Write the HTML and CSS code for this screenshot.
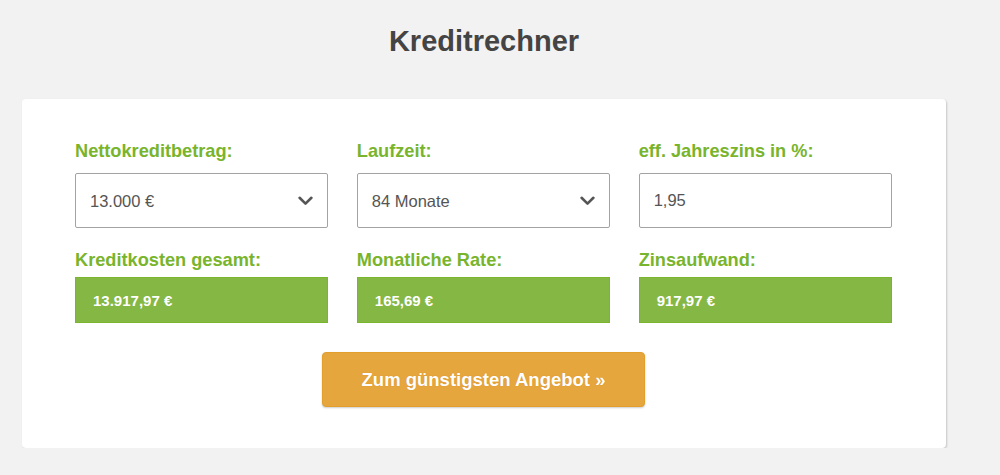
FILE: index.html
```html
<!DOCTYPE html>
<html lang="de">
<head>
<meta charset="utf-8">
<title>Kreditrechner</title>
<link rel="stylesheet" href="styles.css">
</head>
<body>
<div class="wrap">
  <h1 class="title">Kreditrechner</h1>
  <div class="card">
    <div class="grid">
      <div class="field">
        <label class="label">Nettokreditbetrag:</label>
        <div class="select-wrap">
          <select class="control select">
            <option>13.000 €</option>
          </select>
          <svg class="chev" width="15" height="10" viewBox="0 0 15 10"><path d="M1.6 1.8 L7.5 7.6 L13.4 1.8" fill="none" stroke="#555" stroke-width="2.6" stroke-linecap="round" stroke-linejoin="round"/></svg>
        </div>
      </div>
      <div class="field">
        <label class="label">Laufzeit:</label>
        <div class="select-wrap">
          <select class="control select">
            <option>84 Monate</option>
          </select>
          <svg class="chev" width="15" height="10" viewBox="0 0 15 10"><path d="M1.6 1.8 L7.5 7.6 L13.4 1.8" fill="none" stroke="#555" stroke-width="2.6" stroke-linecap="round" stroke-linejoin="round"/></svg>
        </div>
      </div>
      <div class="field">
        <label class="label">eff. Jahreszins in %:</label>
        <input class="control" type="text" value="1,95">
      </div>
      <div class="field">
        <span class="label label2">Kreditkosten gesamt:</span>
        <div class="result">13.917,97 €</div>
      </div>
      <div class="field">
        <span class="label label2">Monatliche Rate:</span>
        <div class="result">165,69 €</div>
      </div>
      <div class="field">
        <span class="label label2">Zinsaufwand:</span>
        <div class="result">917,97 €</div>
      </div>
    </div>
    <div class="actions">
      <button class="cta" type="button">Zum günstigsten Angebot »</button>
    </div>
  </div>
</div>
</body>
</html>
```
FILE: styles.css
```css
* { box-sizing: border-box; }
html, body { margin: 0; padding: 0; }
body {
  background: #f2f2f2;
  font-family: "Liberation Sans", Arial, Helvetica, sans-serif;
  color: #444;
}
.wrap {
  width: 924px;
  margin-left: 22px;
}
.title {
  margin: 24px 0 0;
  font-size: 29px;
  line-height: 34px;
  font-weight: bold;
  color: #444;
  text-align: center;
}
.card {
  margin-top: 41px;
  background: #fff;
  border-radius: 4px;
  box-shadow: 1px 1px 2px rgba(0, 0, 0, 0.18);
  padding: 41px 54px 41px 53px;
}
.grid {
  display: grid;
  grid-template-columns: repeat(3, 1fr);
  column-gap: 28.5px;
  row-gap: 21px;
}
.field {
  display: flex;
  flex-direction: column;
}
.label {
  display: block;
  font-size: 18.2px;
  line-height: 22px;
  font-weight: bold;
  color: #78b42c;
  margin-bottom: 11px;
}
.label2 { margin-bottom: 6px; }
.select-wrap { position: relative; }
.control {
  display: block;
  width: 100%;
  height: 55px;
  margin: 0;
  border: 1px solid #a3a3a3;
  border-radius: 2px;
  background: #fff;
  padding: 0 14px;
  font-family: "Liberation Sans", Arial, Helvetica, sans-serif;
  font-size: 16.5px;
  color: #555;
  outline: none;
}
.select {
  -webkit-appearance: none;
  appearance: none;
}
.chev {
  position: absolute;
  right: 15px;
  top: 23px;
  pointer-events: none;
}
.result {
  height: 46px;
  display: flex;
  align-items: center;
  padding-left: 17px;
  background: #84b743;
  border: 1px solid #79b62d;
  color: #fff;
  font-weight: bold;
  font-size: 15px;
}
.actions {
  display: flex;
  justify-content: center;
  margin-top: 29px;
}
.cta {
  width: 323px;
  height: 55px;
  background: #e6a63e;
  border: 1px solid #e39f2c;
  border-radius: 4px;
  box-shadow: 0 1px 2px rgba(0, 0, 0, 0.2);
  color: #fff;
  font-family: "Liberation Sans", Arial, Helvetica, sans-serif;
  font-size: 18.5px;
  font-weight: bold;
  text-shadow: 0 0 1px rgba(200, 120, 0, 0.6);
  cursor: pointer;
}
```
